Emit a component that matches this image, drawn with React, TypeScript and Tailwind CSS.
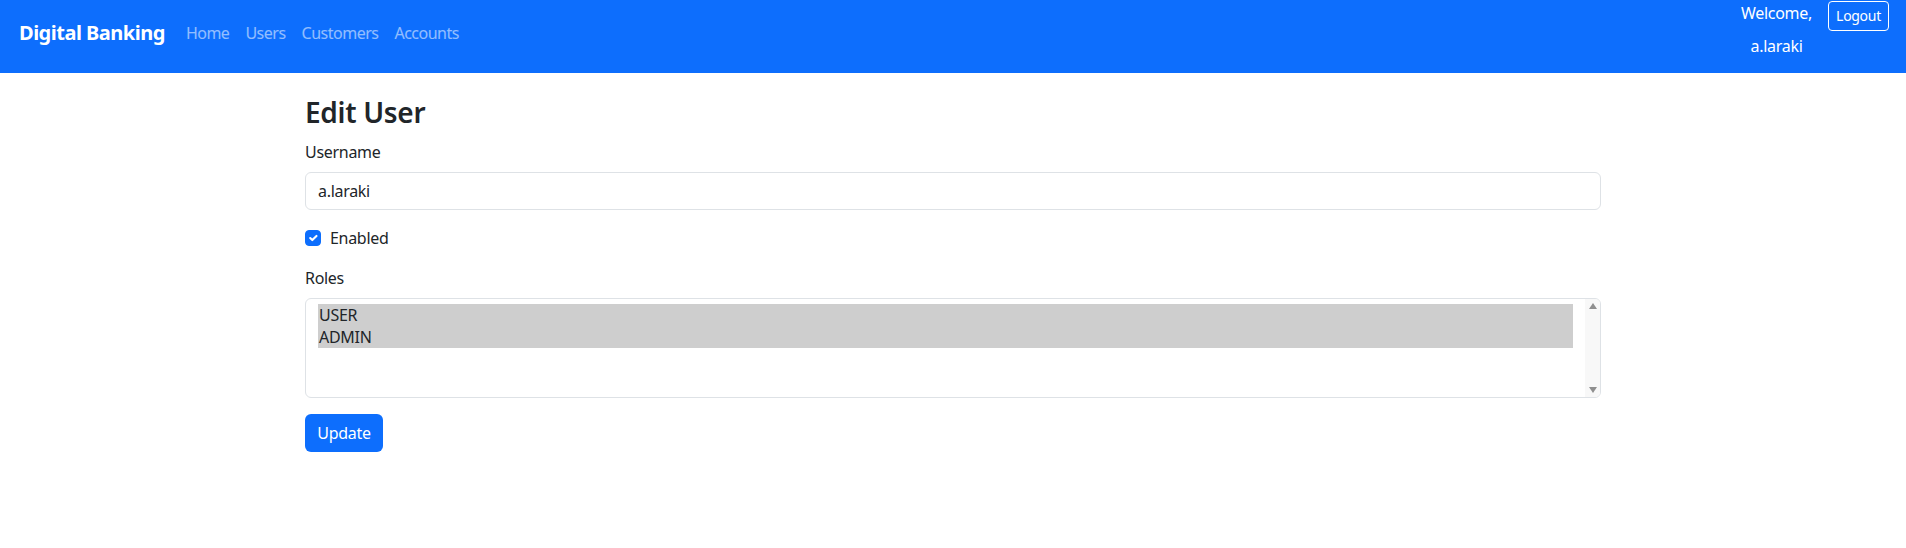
import React, { useState } from 'react';

const font = { fontFamily: '"Segoe UI", "Noto Sans", "Liberation Sans", sans-serif' };

const NavBar: React.FC = () => {
  const links = ['Home', 'Users', 'Customers', 'Accounts'];
  return (
    <nav className="h-[73px] bg-[#0d6efd] flex items-start">
      <div className="h-[66px] flex items-center pl-[19px]">
        <a className="text-white text-[20px] font-bold tracking-[-0.5px] mr-[13px] cursor-pointer">Digital Banking</a>
        <ul className="flex items-center">
          {links.map((l) => (
            <li key={l}>
              <a className="px-2 text-[16px] tracking-[-0.5px] text-white/55 hover:text-white/75 cursor-pointer">{l}</a>
            </li>
          ))}
        </ul>
      </div>
      <div className="ml-auto flex items-start gap-4 pr-[17px]">
        <div className="text-white text-[16px] tracking-[-0.3px] text-center">
          <div className="h-[26px] leading-[26px]">Welcome,</div>
          <div className="mt-[7px] h-[26px] leading-[26px]">a.laraki</div>
        </div>
        <button className="mt-[1px] h-[30px] w-[61px] border border-white rounded text-white text-[14px] tracking-[-0.3px] leading-none">
          Logout
        </button>
      </div>
    </nav>
  );
};

const CheckIcon: React.FC = () => (
  <svg viewBox="0 0 20 20" className="w-4 h-4">
    <path fill="none" stroke="#fff" strokeLinecap="round" strokeLinejoin="round" strokeWidth="3" d="m6 10 3 3 6-6" />
  </svg>
);

const App: React.FC = () => {
  const [enabled, setEnabled] = useState(true);
  return (
    <div className="min-h-screen bg-white text-[#212529]" style={font}>
      <NavBar />
      <main className="w-[1296px] mx-auto pt-[23px]">
        <h3 className="text-[28px] font-semibold tracking-[-0.3px] leading-[1.2] mb-[10px]">Edit User</h3>
        <label className="block text-[16px] tracking-[-0.3px] leading-6 mb-2">Username</label>
        <input
          defaultValue="a.laraki"
          className="block w-full h-[38px] px-3 border border-[#dee2e6] rounded-[6px] text-[16px] tracking-[-0.3px] text-[#212529] outline-none"
        />
        <label
          className="mt-4 flex items-center h-6 text-[16px] tracking-[-0.3px] cursor-pointer"
          onClick={() => setEnabled(!enabled)}
        >
          <span
            className={`w-4 h-4 rounded-[4px] flex items-center justify-center ${
              enabled ? 'bg-[#0d6efd] border border-[#0d6efd]' : 'bg-white border border-[#dee2e6]'
            }`}
          >
            {enabled && <CheckIcon />}
          </span>
          <span className="ml-[9px]">Enabled</span>
        </label>
        <label className="block mt-4 text-[16px] tracking-[-0.3px] leading-6 mb-2">Roles</label>
        <div className="flex h-[100px] border border-[#dee2e6] rounded-[6px] overflow-hidden">
          <div className="flex-1 pt-[5px] pl-3 pr-3 text-[16px] tracking-[-0.3px] leading-[22px]">
            <div className="bg-[#cecece] pl-[1px]">USER</div>
            <div className="bg-[#cecece] pl-[1px]">ADMIN</div>
          </div>
          <div className="w-[15px] bg-[#f8f8f8] flex flex-col items-center justify-between py-[3px]">
            <svg viewBox="0 0 8 6" className="w-[8px] h-[6px] mt-[1px]">
              <path d="M4 0 8 6H0z" fill="#8f8f8f" />
            </svg>
            <svg viewBox="0 0 8 6" className="w-[8px] h-[6px] mb-[1px]">
              <path d="M0 0h8L4 6z" fill="#8f8f8f" />
            </svg>
          </div>
        </div>
        <button className="mt-4 w-[78px] h-[38px] rounded-[6px] bg-[#0d6efd] text-white text-[16px] tracking-[-0.3px]">
          Update
        </button>
      </main>
    </div>
  );
};

export default App;
